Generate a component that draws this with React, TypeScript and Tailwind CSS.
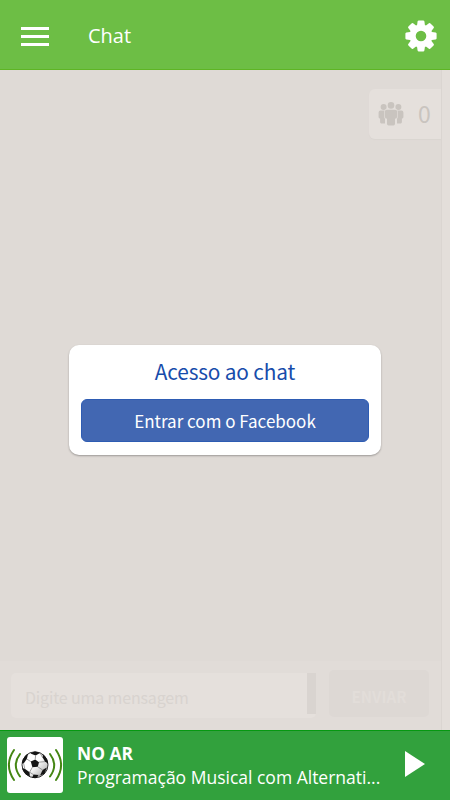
import React from "react";

const sansCjk = "font-['Noto_Sans_CJK_SC','Noto_Sans',sans-serif]";

const GearIcon = () => (
  <svg viewBox="-16 -16 32 32" className="h-8 w-8" fill="#fff">
    <circle r="8.4" fill="none" stroke="#fff" strokeWidth="6.2" />
    {[0, 45, 90, 135, 180, 225, 270, 315].map((angle) => (
      <path
        key={angle}
        d="M-4.2 -9 L-3.4 -14.6 Q-3.2 -15.6 -2.2 -15.6 H2.2 Q3.2 -15.6 3.4 -14.6 L4.2 -9Z"
        transform={`rotate(${angle})`}
      />
    ))}
  </svg>
);

const PeopleIcon = () => (
  <svg viewBox="0 0 26 26" className="h-[26px] w-[26px]" fill="#c9c4bf">
    <circle cx="13" cy="4.4" r="3.3" />
    <circle cx="5.6" cy="6" r="3" />
    <circle cx="20.4" cy="6" r="3" />
    <path d="M2.4 9.6H7V22.4H3.2Q2.1 22.4 2.1 21V17.4H1.7Q.6 17.2 .6 16V11.4Q.6 9.6 2.4 9.6Z" />
    <path d="M23.6 9.6H19V22.4H22.8Q23.9 22.4 23.9 21V17.4H24.3Q25.4 17.2 25.4 16V11.4Q25.4 9.6 23.6 9.6Z" />
    <path
      d="M8.7 8.8H17.3Q19.1 8.8 19.1 10.6V15.8Q19.1 17.8 17 17.8V22.7Q17 24.5 15.4 24.5H10.6Q9 24.5 9 22.7V17.8Q6.9 17.8 6.9 15.8V10.6Q6.9 8.8 8.7 8.8Z"
      stroke="#e5e0dc"
      strokeWidth="1.2"
      paintOrder="stroke"
    />
  </svg>
);

const StationLogo = () => (
  <svg viewBox="0 0 56 56" className="h-14 w-14 shrink-0 rounded-[3px] bg-white">
    <defs>
      <clipPath id="ball">
        <circle cx="28" cy="27.8" r="13.3" />
      </clipPath>
      <linearGradient id="shade" x1="0" y1="0" x2="1" y2="1">
        <stop offset="0.5" stopColor="#fff" />
        <stop offset="1" stopColor="#999" />
      </linearGradient>
    </defs>
    <g fill="none" stroke="#458613" strokeLinecap="round">
      <path d="M7 13Q-3.2 28 7 43" strokeWidth="2" />
      <path d="M13 17Q4.6 28 13 39.5" strokeWidth="2" />
      <path d="M49 13Q59.2 28 49 43" strokeWidth="2" />
      <path d="M43 17Q51.4 28 43 39.5" strokeWidth="2" />
    </g>
    <circle cx="28" cy="27.8" r="13" fill="url(#shade)" stroke="#333" strokeWidth="1" />
    <g clipPath="url(#ball)" fill="#151515">
      <path d="M23.8 24.6L28.2 22.4L32 25.2L30.8 29.8L25.4 30.2Z" />
      <path d="M23.5 16.4L28 14L33 16L28.6 18.6Z" />
      <path d="M18 17.4L21.2 16.6L19.8 22L16.6 26.4L14 26Z" />
      <path d="M35.8 16.5L40 21L41.5 27L38 24.6L35.6 20.6Z" />
      <path d="M35.6 33L39.8 30.5L37.5 36.8L33 38.4Z" />
      <path d="M14.6 31L17.8 31.8L22.6 35.2L22.8 39.5L17 37Z" />
      <path d="M26.4 37.6L31.5 38L29.5 41.5H25Z" />
      <path
        d="M28.2 22.4L28.6 18.6M32 25.2L38 24.6M30.8 29.8L35.6 33M25.4 30.2L22.6 35.2L26.4 37.6M23.8 24.6L19.8 22M31.5 38L33 38.4M16.6 26.4L17.8 31.8M33 16L35.6 20.6"
        fill="none"
        stroke="#777"
        strokeWidth=".7"
      />
    </g>
  </svg>
);

const Header = () => (
  <header className="flex h-[70px] shrink-0 items-center border-b border-[#5eb524] bg-[#6dbe45] pr-[13px] pl-[21px]">
    <button className="flex w-7 flex-col gap-1 pt-[3px]">
      <span className="mb-px h-[3px] bg-white" />
      <span className="mb-px h-[3px] bg-white" />
      <span className="h-[3px] bg-white" />
    </button>
    <h1 className="ml-[39px] pt-[3px] text-[20px] leading-7 text-white">Chat</h1>
    <button className="ml-auto pt-[2px]">
      <GearIcon />
    </button>
  </header>
);

const LoginCard = () => (
  <div
    className={`h-[110px] w-[312px] rounded-[10px] bg-white px-3 text-center shadow-[0_1px_2px_rgba(0,0,0,0.3)] ${sansCjk}`}
  >
    <h2 className="pt-[12px] text-[20.8px] leading-[28px] tracking-[-0.15px] text-[#174cab]">
      Acesso ao chat
    </h2>
    <button className="mt-[14px] h-[43px] w-full rounded-[6px] border border-[#2e5cb3] bg-[#4267b2] text-[17px] leading-[40px] text-white">
      Entrar com o Facebook
    </button>
  </div>
);

const MessageBar = () => (
  <div className={`flex h-[69px] w-full bg-[#e1dcd8] pt-[9px] pl-[11px] ${sansCjk}`}>
    <div className="mt-[3px] flex h-[45px] w-[305px] rounded-[5px] bg-[#e5e0dc]">
      <span className="flex-1 pt-[3px] pl-[14px] text-[16px] leading-[42px] tracking-[-0.15px] text-[#d8d3cf]">
        Digite uma mensagem
      </span>
      <span className="h-[41px] w-[9px] bg-[#d9d4d0]" />
    </div>
    <button className="ml-[13px] h-[47px] w-[100px] rounded-[5px] bg-[#ddd8d4] pt-[5px] text-[15.2px] font-bold text-[#e2ddd9]">
      ENVIAR
    </button>
  </div>
);

const Player = () => (
  <footer className="flex h-[70px] shrink-0 items-center border-t border-[#069811] bg-[#32a13d] pr-[25px] pb-px pl-[7px] text-white shadow-[0_-1px_3px_rgba(0,0,0,0.18)]">
    <StationLogo />
    <div className="ml-[14px] w-[304px]">
      <p className="text-[17.4px] leading-6 font-bold">NO AR</p>
      <p className="text-[17.5px] leading-6 whitespace-nowrap">
        Programação Musical com Alternati...
      </p>
    </div>
    <svg viewBox="0 0 20 26" className="mb-[2px] ml-auto h-[26px] w-5" fill="#fff">
      <path d="M0 0L20 13L0 26Z" />
    </svg>
  </footer>
);

export default function App() {
  return (
    <div className="flex h-[800px] w-[450px] flex-col overflow-hidden bg-[#dfdad6] font-['Open_Sans','Noto_Sans',sans-serif]">
      <Header />
      <main className="relative flex min-h-0 flex-1">
        <section className="flex w-[441px] flex-col justify-between">
          <div className="mt-[19px] ml-auto flex h-[50px] w-[72px] items-center rounded-l-[6px] bg-[#e5e0dc] pl-[9px] shadow-[0_1px_1px_#dad5d1]">
            <PeopleIcon />
            <span className={`ml-[14px] pb-[2px] text-[23px] text-[#c9c4bf] ${sansCjk}`}>
              0
            </span>
          </div>
          <MessageBar />
        </section>
        <div className="w-[9px] border-l border-[#dad5d1] bg-[#e3deda]" />
        <div className="absolute inset-0 flex items-center justify-center">
          <LoginCard />
        </div>
      </main>
      <Player />
    </div>
  );
}
